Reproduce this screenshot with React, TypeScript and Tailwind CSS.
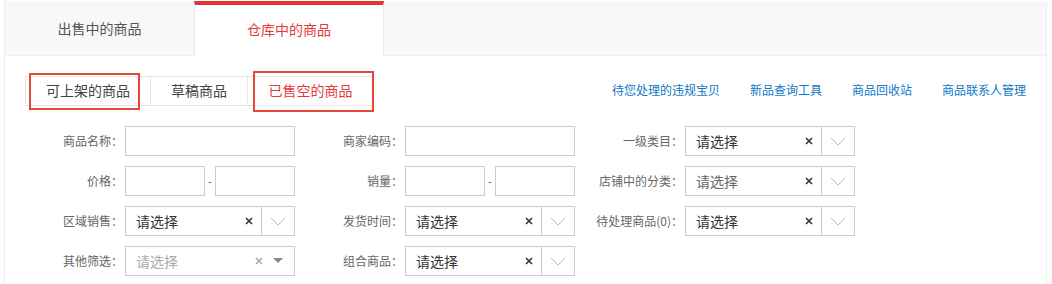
import React from "react";

const font = { fontFamily: '"Noto Sans CJK SC", "Noto Sans", sans-serif' };

function Clear({ muted }: { muted?: boolean }) {
  return (
    <svg width="8" height="8" viewBox="0 0 8 8" className="shrink-0">
      <path
        d="M1 1 L7 7 M7 1 L1 7"
        stroke={muted ? "#aaa" : "#333"}
        strokeWidth="1.6"
        fill="none"
      />
    </svg>
  );
}

function Chevron() {
  return (
    <svg width="16" height="9" viewBox="0 0 16 9">
      <polyline points="1,1 8,8 15,1" stroke="#bbb" strokeWidth="1" fill="none" />
    </svg>
  );
}

function TextInput({ w = "w-[170px]" }: { w?: string }) {
  return <div className={`${w} h-[30px] border border-[#ccc] bg-white`} />;
}

function Range() {
  return (
    <div className="flex items-center w-[170px]">
      <TextInput w="w-[80px]" />
      <span className="w-[10px] text-center text-[12px] text-[#666]">-</span>
      <TextInput w="w-[80px]" />
    </div>
  );
}

function Select({ tone = "text-[#333]" }: { tone?: string }) {
  return (
    <div className="flex items-center w-[170px] h-[30px] border border-[#ccc] bg-white">
      <span className={`flex-1 pl-[10px] text-[14px] leading-[28px] ${tone}`}>请选择</span>
      <span className="pr-[8px]">
        <Clear />
      </span>
      <span className="w-[33px] h-full border-l border-[#ccc] flex items-center justify-center">
        <Chevron />
      </span>
    </div>
  );
}

function DisabledSelect() {
  return (
    <div className="flex items-center w-[170px] h-[30px] border border-[#ccc] bg-white">
      <span className="flex-1 pl-[10px] text-[14px] leading-[28px] text-[#aaa]">请选择</span>
      <span className="pr-[10px]">
        <Clear muted />
      </span>
      <svg width="10" height="6" viewBox="0 0 10 6" className="mr-[11px]">
        <polygon points="0,0 10,0 5,5" fill="#888" />
      </svg>
    </div>
  );
}

function Field({ label, children }: { label: string; children: React.ReactNode }) {
  return (
    <div className="flex items-center h-[30px]">
      <span className="w-[100px] pr-[2px] text-right text-[12px] text-[#666] leading-[30px] whitespace-nowrap">
        {label}
      </span>
      {children}
    </div>
  );
}

export default function App() {
  return (
    <div className="bg-white w-[1052px] h-[284px] overflow-hidden pl-[4px] pt-[1px]" style={font}>
      <div className="w-[1043px] h-[290px] border-x border-[#eee]">
        <div className="flex h-[55px] bg-[#f8f8f8] border-b border-[#eee]">
          <div className="w-[189px] flex items-center justify-center text-[14px] text-[#555]">
            出售中的商品
          </div>
          <div className="w-[190px] mb-[-1px] bg-white border-t-[4px] border-[#e33333] border-l border-l-[#e8e8e8] border-r border-r-[#e8e8e8] flex items-center justify-center text-[14px] text-[#e4393c] pb-[2px]">
            仓库中的商品
          </div>
        </div>

        <div className="relative flex items-center justify-between pl-[20px] pr-[20px] mt-[20px]">
          <div className="flex h-[30px] border border-[#e6e6e6]">
            <div className="w-[125px] flex items-center justify-center text-[14px] text-[#444] border-r border-[#e6e6e6] pb-[1px]">
              可上架的商品
            </div>
            <div className="w-[97px] flex items-center justify-center text-[14px] text-[#444] border-r border-[#e6e6e6] pb-[1px]">
              草稿商品
            </div>
            <div className="w-[125px] flex items-center justify-center text-[14px] text-[#e4393c] pb-[1px]">
              已售空的商品
            </div>
          </div>
          <div className="flex gap-[30px] text-[12px] text-[#0f77c6] pb-[2px]">
            <span>待您处理的违规宝贝</span>
            <span>新品查询工具</span>
            <span>商品回收站</span>
            <span>商品联系人管理</span>
          </div>
          <div className="absolute left-[24px] top-[-3px] w-[111px] h-[37px] border-2 border-[#e5473b]" />
          <div className="absolute left-[248px] top-[-5px] w-[121px] h-[41px] border-2 border-[#e5473b]" />
        </div>

        <div className="grid grid-cols-[repeat(3,280px)] gap-y-[10px] pl-[20px] mt-[20px]">
          <Field label="商品名称：">
            <TextInput />
          </Field>
          <Field label="商家编码：">
            <TextInput />
          </Field>
          <Field label="一级类目：">
            <Select />
          </Field>

          <Field label="价格：">
            <Range />
          </Field>
          <Field label="销量：">
            <Range />
          </Field>
          <Field label="店铺中的分类：">
            <Select tone="text-[#666]" />
          </Field>

          <Field label="区域销售：">
            <Select />
          </Field>
          <Field label="发货时间：">
            <Select />
          </Field>
          <Field label="待处理商品(0)：">
            <Select />
          </Field>

          <Field label="其他筛选：">
            <DisabledSelect />
          </Field>
          <Field label="组合商品：">
            <Select />
          </Field>
        </div>
      </div>
    </div>
  );
}
